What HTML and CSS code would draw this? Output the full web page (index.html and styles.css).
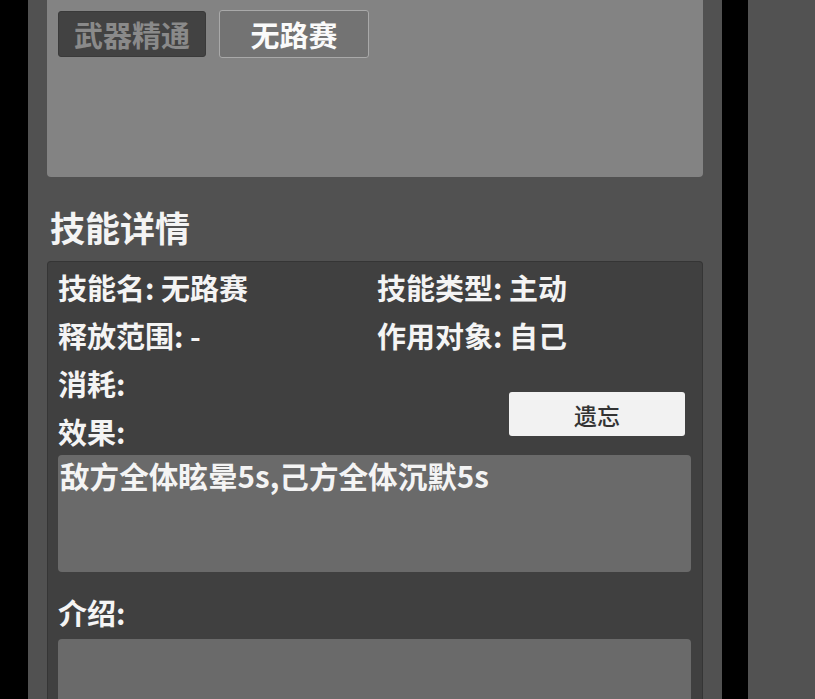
FILE: index.html
```html
<!DOCTYPE html>
<html lang="zh">
<head>
<meta charset="utf-8">
<link rel="stylesheet" href="styles.css">
</head>
<body>
<div class="screen">
  <div class="edge-left"></div>
  <div class="panel">
    <div class="skill-list">
      <div class="tab tab-off">武器精通</div>
      <div class="tab tab-on">无路赛</div>
    </div>
    <div class="title">技能详情</div>
    <div class="detail">
      <div class="info-grid">
        <div class="cell">技能名: 无路赛</div>
        <div class="cell">技能类型: 主动</div>
        <div class="cell">释放范围: -</div>
        <div class="cell">作用对象: 自己</div>
        <div class="cell">消耗:</div>
        <div class="btn-wrap"><div class="forget">遗忘</div></div>
        <div class="cell">效果:</div>
      </div>
      <div class="textbox effect">敌方全体眩晕5s,己方全体沉默5s</div>
      <div class="label-intro">介绍:</div>
      <div class="textbox intro"></div>
    </div>
  </div>
  <div class="edge-mid"></div>
  <div class="side"></div>
</div>
</body>
</html>
```
FILE: styles.css
```css
html, body {
  margin: 0;
  padding: 0;
  height: 100%;
  overflow: hidden;
  background: #000;
}
body {
  font-family: "Noto Sans CJK SC", "Noto Sans", sans-serif;
  color: #f4f4f4;
}
.screen {
  display: flex;
  height: 699px;
  overflow: hidden;
}
.edge-left {
  width: 28px;
  background: #000;
  flex: none;
}
.panel {
  width: 656px;
  flex: none;
  background: #515151;
  padding: 0 19px;
  display: flex;
  flex-direction: column;
}
.panel > * {
  flex-shrink: 0;
}
.edge-mid {
  width: 26px;
  flex: none;
  background: #000;
}
.side {
  flex: 1;
  background: #525252;
}
.skill-list {
  height: 177px;
  box-sizing: border-box;
  background: #838383;
  border-radius: 0 0 4px 4px;
  padding: 10px 11px;
  display: flex;
  align-items: flex-start;
  gap: 13px;
}
.tab {
  height: 46px;
  box-sizing: border-box;
  border-radius: 3px;
  font-size: 29px;
  font-weight: 700;
  line-height: 44px;
  text-align: center;
}
.tab-off {
  margin-top: 1px;
  width: 148px;
  background: #424242;
  color: #8a8a8a;
  border: 1px solid #3a3a3a;
}
.tab-on {
  width: 150px;
  height: 48px;
  line-height: 46px;
  background: #737373;
  color: #fafafa;
  border: 1px solid #a9a9a9;
}
.title {
  margin: 30px 0 14px 3px;
  font-size: 35px;
  font-weight: 700;
  line-height: 40px;
}
.detail {
  flex: 1 0 auto;
  background: #404040;
  border: 1px solid #353535;
  border-bottom: none;
  border-radius: 4px 4px 0 0;
  padding: 1px 11px 0 10px;
}
.info-grid {
  display: grid;
  grid-template-columns: 319px 1fr;
  grid-auto-rows: 48px;
  font-size: 29px;
  font-weight: 700;
  line-height: 48px;
}
.cell {
  white-space: nowrap;
}
.btn-wrap {
  grid-column: 2;
  grid-row: 3 / span 2;
  display: flex;
  justify-content: flex-end;
  align-items: flex-start;
  padding: 33px 6px 0 0;
}
.forget {
  width: 176px;
  height: 44px;
  background: #f2f2f2;
  border-radius: 3px;
  color: #333;
  font-size: 23px;
  font-weight: 500;
  line-height: 46px;
  text-align: center;
}
.cell:nth-of-type(5) {
  grid-column: 1;
  grid-row: 3;
}
.cell:nth-of-type(6) {
  grid-column: 1;
  grid-row: 4;
}
.textbox {
  background: #6a6a6a;
  border-radius: 4px;
}
.effect {
  height: 117px;
  box-sizing: border-box;
  padding: 1px 2px;
  font-size: 29.6px;
  font-weight: 700;
  line-height: 40px;
  white-space: nowrap;
}
.label-intro {
  padding: 16px 0 3px;
  font-size: 29px;
  font-weight: 700;
  line-height: 48px;
}
.intro {
  height: 80px;
}
```
